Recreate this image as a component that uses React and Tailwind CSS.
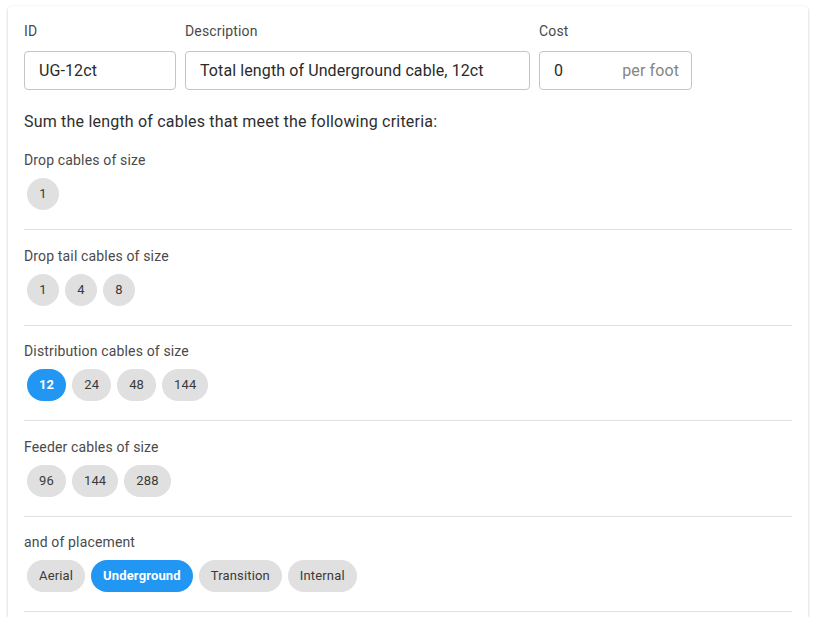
import React from 'react';

const sections = [
    { label: 'Drop cables of size', chips: ['1'], selected: [] },
    { label: 'Drop tail cables of size', chips: ['1', '4', '8'], selected: [] },
    { label: 'Distribution cables of size', chips: ['12', '24', '48', '144'], selected: ['12'] },
    { label: 'Feeder cables of size', chips: ['96', '144', '288'], selected: [] },
    { label: 'and of placement', chips: ['Aerial', 'Underground', 'Transition', 'Internal'], selected: ['Underground'] },
];

function Chip({ label, active }) {
    return (
        <span
            className={`m-[3px] inline-flex h-8 min-w-8 items-center justify-center rounded-full px-3 text-[13px] tracking-[0.15px] ${
                active ? 'bg-[#2196f3] font-bold text-white' : 'bg-[#e0e0e0] text-[#3a3a3a]'
            }`}
        >
            {label}
        </span>
    );
}

function Field({ label, width, value, suffix }) {
    return (
        <div className={width}>
            <div className="mb-[10px] text-[14px] leading-5 tracking-[0.15px] text-[#4a4a4a]">{label}</div>
            <div className="flex h-[39px] items-center rounded border border-[#c4c4c4] pl-[14px] pr-[12px]">
                <span className="flex-1 truncate text-[16px] tracking-[0.1px] text-[#2a2a2a]">{value}</span>
                {suffix && <span className="text-[16px] tracking-[0.1px] text-[#858585]">{suffix}</span>}
            </div>
        </div>
    );
}

export default function App() {
    return (
        <div className="min-h-screen bg-white px-2 pt-[6px] font-['Roboto',sans-serif]">
            <div className="w-[800px] rounded bg-white px-4 pt-[15px] pb-4 shadow-[0_1px_3px_rgba(0,0,0,0.2),0_1px_1px_rgba(0,0,0,0.14),0_2px_1px_-1px_rgba(0,0,0,0.12)]">
                {/* Fields */}
                <div className="flex gap-[9px]">
                    <Field label="ID" width="w-[152px]" value="UG-12ct" />
                    <Field label="Description" width="w-[345px]" value="Total length of Underground cable, 12ct" />
                    <Field label="Cost" width="w-[153px]" value="0" suffix="per foot" />
                </div>

                <h3 className="mt-5 text-[16px] font-normal leading-6 tracking-[0.2px] text-[#2e2e2e]">
                    Sum the length of cables that meet the following criteria:
                </h3>

                <div className="mt-4">
                    {sections.map((s) => (
                        <div key={s.label}>
                            <div className="text-[14px] leading-5 tracking-[0.15px] text-[#4a4a4a]">{s.label}</div>
                            <div className="mt-[5px] flex flex-wrap">
                                {s.chips.map((c) => (
                                    <Chip key={c} label={c} active={s.selected.includes(c)} />
                                ))}
                            </div>
                            <div className="mt-4 mb-[15.5px] h-px bg-[#e0e0e0]" />
                        </div>
                    ))}
                </div>
            </div>
        </div>
    );
}
